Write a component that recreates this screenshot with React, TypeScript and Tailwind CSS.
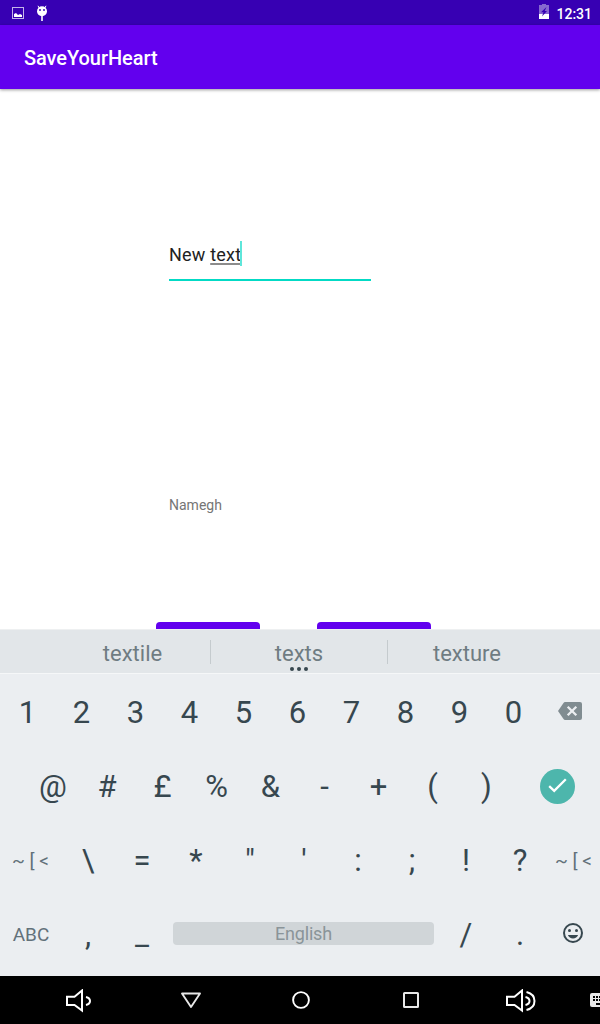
import type { ReactNode } from "react";

function Glyph({ children }: { children: ReactNode }) {
  return (
    <div className="flex w-[54px] shrink-0 items-center justify-center text-[31px] leading-[36px] text-[#37474f]">
      {children}
    </div>
  );
}

function Keys({ chars }: { chars: string[] }) {
  return (
    <>
      {chars.map((c) => (
        <Glyph key={c}>{c}</Glyph>
      ))}
    </>
  );
}

function StatusBar() {
  return (
    <div className="flex h-[25px] shrink-0 items-center justify-between bg-[#3700b3] pl-3 pr-2 text-white">
      <div className="flex items-center gap-[11px]">
        <svg width="12" height="12" viewBox="0 0 12 12">
          <rect x=".5" y=".5" width="11" height="11" fill="none" stroke="#c3b3e8" />
          <path d="M2 10V7l2-1 2 2 2-1 2 1v2z" fill="white" />
        </svg>
        <svg width="14" height="17" viewBox="0 0 14 17" className="mt-[1px]">
          <path d="M3 .8 4.2 3M11 .8 9.8 3" stroke="white" />
          <circle cx="7" cy="6.3" r="5" fill="white" />
          <rect x="4" y="4" width="2" height="2" fill="#6d49c7" />
          <rect x="8" y="4" width="2" height="2" fill="#6d49c7" />
          <rect x="6" y="11" width="2" height="5" fill="#d7ccf0" />
        </svg>
      </div>
      <div className="flex items-center gap-[7px]">
        <svg width="10" height="15" viewBox="0 0 10 15" className="-mt-[2px]">
          <path d="M0 1h3V0h4v1h3v14H0z" fill="#8768d0" />
          <path d="M0 10h10v5H0z" fill="white" />
          <path d="M7.5 3 2 8.2h2.5L3 12.4 8 7H5.7z" fill="#3700b3" />
        </svg>
        <span className="pt-[3px] text-[14px] font-medium leading-[22px]">12:31</span>
      </div>
    </div>
  );
}

function Suggestions() {
  return (
    <div className="relative flex h-[45px] shrink-0 items-center border-b border-t border-b-[#f5f7f8] border-t-[#eef0f1] bg-[#e2e6e9] text-[22px] leading-[26px] text-[#6f7c82]">
      <div className="w-[210px] pl-[55px] pt-1 text-center">textile</div>
      <div className="h-6 w-px bg-[#c5cbce]" />
      <div className="w-[176px] pt-1 text-center">texts</div>
      <div className="h-6 w-px bg-[#c5cbce]" />
      <div className="w-[158px] pt-1 text-center">texture</div>
      <div className="absolute bottom-[2px] left-[290px] flex gap-[3px]">
        <i className="size-[4px] rounded-full bg-[#37474f]" />
        <i className="size-[4px] rounded-full bg-[#37474f]" />
        <i className="size-[4px] rounded-full bg-[#37474f]" />
      </div>
    </div>
  );
}

function Keyboard() {
  return (
    <div className="flex h-[302px] shrink-0 flex-col bg-[#ebeef1] pt-[2px]">
      <div className="flex h-[74px] pl-[0.5px]">
        <Keys chars={["1", "2", "3", "4", "5", "6", "7", "8", "9", "0"]} />
        <div className="flex flex-1 items-center pl-[17.5px]">
          <svg width="24" height="18" viewBox="0 0 24 18" className="-mt-[4px]">
            <path d="M7.2 0H22a2 2 0 0 1 2 2v14a2 2 0 0 1-2 2H7.2a2 2 0 0 1-1.7-.9L0 9 5.5.9A2 2 0 0 1 7.2 0z" fill="#808c91" />
            <path d="m9.7 4.7 8.6 8.6m0-8.6-8.6 8.6" stroke="#ebeef1" strokeWidth="2.3" />
          </svg>
        </div>
      </div>
      <div className="flex h-[74px] pl-[26px]">
        <Keys chars={["@", "#"]} />
        <div className="flex pl-[1.5px]">
          <Keys chars={["£", "%", "&", "-", "+", "(", ")"]} />
        </div>
        <div className="flex flex-1 items-center pl-[26px]">
          <svg width="35" height="35" viewBox="0 0 35 35" className="-mt-[2px]">
            <circle cx="17.5" cy="17.5" r="17.5" fill="#4db6ac" />
            <path d="m9.2 17.2 5 4.7L25.8 10.2" fill="none" stroke="white" strokeWidth="2.3" />
          </svg>
        </div>
      </div>
      <div className="flex h-[74px]">
        <div className="flex w-[61px] items-center justify-center text-[19px] text-[#62717a]">~ [ &lt;</div>
        <Keys chars={["\\", "=", "*", '"', "'", ":", ";", "!", "?"]} />
        <div className="flex w-[53px] items-center justify-center whitespace-nowrap text-[19px] text-[#62717a]">~ [ &lt;</div>
      </div>
      <div className="flex h-[74px]">
        <div className="flex w-[61px] items-center justify-center pl-px text-[19px] text-[#62717a]">ABC</div>
        <Keys chars={[",", "_"]} />
        <div className="flex w-[270px] items-center pl-[4px]">
          <div className="mb-[4px] flex h-[23px] w-[261px] items-center justify-center rounded-[4px] bg-[#d0d5d8] text-[18px] leading-[23px] tracking-[-0.2px] text-[#8a9499]">
            English
          </div>
        </div>
        <Keys chars={["/", "."]} />
        <div className="flex w-[53px] items-center pl-[16px]">
          <svg width="20" height="20" viewBox="2 2 20 20" fill="#37474f" className="-mt-[4px]">
            <path d="M12 2a10 10 0 1 0 0 20 10 10 0 0 0 0-20zm0 18a8 8 0 1 1 0-16 8 8 0 0 1 0 16z" />
            <circle cx="8.5" cy="9.5" r="1.5" />
            <circle cx="15.5" cy="9.5" r="1.5" />
            <path d="M6.9 14h10.2a5.5 5.5 0 0 1-10.2 0z" />
          </svg>
        </div>
      </div>
    </div>
  );
}

function NavBar() {
  return (
    <div className="flex h-12 shrink-0 items-center bg-black pl-[66px]">
      <svg width="25" height="24" viewBox="0 0 25 24" fill="none" stroke="white" strokeWidth="2" className="mt-[2px]">
        <path d="M1 7.7h7.5L16 1.5v20L8.5 16H1z" />
        <path d="M20 8q4 1 4 4t-4 4" />
      </svg>
      <svg width="22" height="17" viewBox="0 0 22 17" fill="none" stroke="#e8e8e8" strokeWidth="1.9" className="ml-[89px]">
        <path d="M2 1.5h18L11 15z" strokeLinejoin="round" />
      </svg>
      <svg width="18" height="18" viewBox="0 0 18 18" fill="none" stroke="white" strokeWidth="1.9" className="ml-[90px]">
        <circle cx="9" cy="9" r="7.9" />
      </svg>
      <svg width="16" height="16" viewBox="0 0 16 16" fill="none" stroke="#e8e8e8" strokeWidth="2" className="ml-[93px]">
        <rect x="1" y="1" width="14" height="14" rx=".5" />
      </svg>
      <svg width="30" height="24" viewBox="0 0 30 24" fill="none" stroke="white" strokeWidth="2" className="ml-[87px] mt-[2px]">
        <path d="M1 7.7h7.5L16 1.5v20L8.5 16H1z" />
        <path d="M19.5 8q4 1 4 4t-4 4M20.5 3q8 2 8 9t-8 9" />
      </svg>
      <svg width="10" height="14" viewBox="0 0 10 14" className="ml-auto">
        <path d="M2 0h8v14H2a2 2 0 0 1-2-2V2a2 2 0 0 1 2-2z" fill="#e8e8e8" />
        <path d="M3 3h2v2H3zM6 3h2v2H6zM9 3h1v2H9zM3 6h2v2H3zM6 6h2v2H6zM9 6h1v2H9zM6 10h4v2H6z" fill="black" />
      </svg>
    </div>
  );
}

export default function App() {
  return (
    <div className="flex h-[1024px] w-[600px] flex-col overflow-hidden bg-white font-['Roboto',sans-serif]">
      <StatusBar />
      <header className="z-10 flex h-16 shrink-0 items-center bg-[#6200ee] pl-6 pt-[1px] text-[20px] font-medium tracking-[-0.06px] text-white shadow-[0_1px_3px_rgba(0,0,0,0.4)]">
        SaveYourHeart
      </header>
      <main className="flex h-[540px] shrink-0 flex-col overflow-hidden">
        <div className="ml-[169px] mt-[152px] flex h-[40px] w-[202px] shrink-0 items-start border-b-2 border-[#03dac5] text-[18px] leading-[28px] tracking-[0.2px] text-[#212121]">
          <span className="whitespace-pre">New </span>
          <span className="underline decoration-[#8c8c8c] decoration-2 underline-offset-[2px]">text</span>
          <span className="-ml-px h-[25px] w-[2px] bg-[#5ee6da]" />
        </div>
        <div className="ml-[169px] mt-[214px] shrink-0 text-[14px] leading-5 text-[#757575]">Namegh</div>
        <div className="ml-[156px] mt-[107px] flex shrink-0 gap-[57px]">
          <div className="h-9 w-[104px] rounded bg-[#6200ee]" />
          <div className="h-9 w-[114px] rounded bg-[#6200ee]" />
        </div>
      </main>
      <Suggestions />
      <Keyboard />
      <NavBar />
    </div>
  );
}
